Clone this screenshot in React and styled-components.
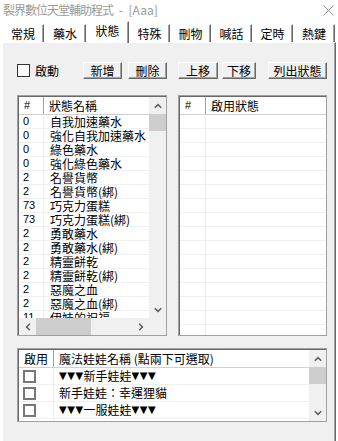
import React from 'react';
import styled, { createGlobalStyle } from 'styled-components';

const CJK = `"Noto Sans CJK TC", "Noto Sans CJK SC", "Liberation Sans", sans-serif`;
const NUM = `"Liberation Sans", Arial, sans-serif`;

const GlobalStyle = createGlobalStyle`
    html, body {
        margin: 0;
        padding: 0;
        background: #fff;
    }
    body {
        font-family: ${CJK};
        font-size: 12px;
        color: #000;
    }
`;

const Window = styled.div`
    width: 338px;
    height: 441px;
    overflow: hidden;
    background: #fff;
    display: flex;
    flex-direction: column;
    font-family: ${CJK};
    font-size: 12px;
`;

const TitleBar = styled.div`
    height: 20px;
    flex-shrink: 0;
    display: flex;
    align-items: center;
    justify-content: space-between;
    padding: 0 4px 0 3px;
    color: #999;
`;

const TitleText = styled.span`
    font-size: 12px;
    letter-spacing: -1px;
    line-height: 1;
    white-space: nowrap;

    span {
        letter-spacing: 0;
        word-spacing: 3px;
    }
`;

const TabStrip = styled.div`
    height: 22px;
    flex-shrink: 0;
    display: flex;
    align-items: flex-end;
    padding-left: 2px;
`;

const Tab = styled.div`
    box-sizing: border-box;
    width: ${props => props.$w}px;
    height: ${props => (props.$active ? 22 : 18)}px;
    margin-bottom: ${props => (props.$active ? -1 : 0)}px;
    position: relative;
    z-index: ${props => (props.$active ? 1 : 0)};
    background: #fff;
    border-top: 1px solid #fff;
    border-left: 1px solid #fff;
    border-right: 1px solid #696969;
    box-shadow: inset -1px 0 0 #a0a0a0;
    display: flex;
    align-items: center;
    justify-content: center;
    padding-bottom: ${props => (props.$active ? 3 : 0)}px;
    line-height: 1;
    white-space: nowrap;
`;

const Panel = styled.div`
    flex: 1;
    margin: 0 2px;
    background: #f0f0f0;
    border-top: 1px solid #fff;
    border-left: 1px solid #fff;
    border-right: 1px solid #696969;
    box-shadow: inset -1px 0 0 #a0a0a0;
    padding: 19px 8px 0 14px;
    display: flex;
    flex-direction: column;
`;

const Toolbar = styled.div`
    height: 17px;
    display: flex;
    align-items: center;
`;

const CheckBox = styled.span`
    box-sizing: border-box;
    flex: none;
    width: 13px;
    height: 13px;
    background: #fff;
    border: ${props => (props.$thick ? '2px solid #777' : '1px solid #333')};
`;

const Label = styled.span`
    margin-left: 5px;
    line-height: 1;
    white-space: nowrap;
`;

const Button = styled.div`
    box-sizing: border-box;
    width: ${props => props.$w}px;
    height: 17px;
    margin-left: ${props => props.$gap}px;
    background: #f0f0f0;
    border: 1px solid;
    border-color: #fff #696969 #696969 #fff;
    box-shadow: inset -1px -1px 0 #a0a0a0;
    display: flex;
    align-items: center;
    justify-content: center;
    line-height: 1;
    white-space: nowrap;
`;

const ListsRow = styled.div`
    margin-top: 16px;
    display: flex;
    gap: 11px;
`;

const ListBox = styled.div`
    box-sizing: border-box;
    width: ${props => props.$w}px;
    height: ${props => props.$h}px;
    margin-top: ${props => props.$top || 0}px;
    border: 1px solid #a0a0a0;
    padding: 1px 0 0 1px;
    box-shadow: inset 1px 1px 0 #696969;
    background: #fff;
    display: grid;
    grid-template-columns: ${props => (props.$vscroll ? '1fr 17px' : '1fr')};
    grid-template-rows: ${props => (props.$hscroll ? '1fr 17px' : '1fr')};
    overflow: hidden;
`;

const ListBody = styled.div`
    min-width: 0;
    min-height: 0;
    overflow: hidden;
    background: #fff;
`;

const HeaderRow = styled.div`
    box-sizing: border-box;
    height: 18px;
    display: flex;
    border-bottom: 1px solid #d0d0d0;
    background: #fff;
`;

const HeadCell = styled.div`
    box-sizing: border-box;
    width: ${props => (props.$w ? `${props.$w}px` : 'auto')};
    flex: ${props => (props.$w ? 'none' : '1')};
    border-right: ${props => (props.$w ? '1px solid #a0a0a0' : 'none')};
    padding-left: 5px;
    display: flex;
    align-items: center;
    font-family: ${props => (props.$num ? NUM : CJK)};
    font-size: ${props => (props.$num ? 11 : 12)}px;
    line-height: 1;
    white-space: nowrap;
`;

const Row = styled.div`
    box-sizing: border-box;
    height: ${props => props.$h}px;
    display: flex;
    border-bottom: 1px solid #f0f0f0;
    white-space: nowrap;
`;

const Cell = styled.div`
    box-sizing: border-box;
    width: ${props => (props.$w ? `${props.$w}px` : 'auto')};
    flex: ${props => (props.$w ? 'none' : '1')};
    border-right: ${props => (props.$w ? '1px solid #f0f0f0' : 'none')};
    padding-left: ${props => props.$pad}px;
    display: flex;
    align-items: center;
    font-family: ${props => (props.$num ? NUM : CJK)};
    font-size: ${props => (props.$num ? 11 : 12)}px;
    line-height: 1;
`;

const Tri = styled.span`
    font-family: "DejaVu Sans", sans-serif;
    font-size: 10px;
    letter-spacing: 0.5px;
`;

const VScroll = styled.div`
    background: #f0f0f0;
    display: flex;
    flex-direction: column;
    min-height: 0;
`;

const HScroll = styled.div`
    background: #f0f0f0;
    display: flex;
    min-width: 0;
`;

const ArrowBox = styled.div`
    flex: none;
    width: 17px;
    height: 17px;
    display: flex;
    align-items: center;
    justify-content: center;
`;

const Thumb = styled.div`
    flex: none;
    background: #cdcdcd;
    width: ${props => (props.$horizontal ? `${props.$size}px` : '17px')};
    height: ${props => (props.$horizontal ? '17px' : `${props.$size}px`)};
`;

const Spacer = styled.div`
    flex: 1;
`;

const Corner = styled.div`
    background: #f0f0f0;
`;

const Chevron = ({ dir }) => {
    const pts = {
        up: '0.8,4.8 4,1.6 7.2,4.8',
        down: '0.8,1.2 4,4.4 7.2,1.2',
        left: '4.8,0.8 1.6,4 4.8,7.2',
        right: '1.2,0.8 4.4,4 1.2,7.2',
    }[dir];
    const vertical = dir === 'up' || dir === 'down';
    return (
        <svg width={vertical ? 8 : 6} height={vertical ? 6 : 8} viewBox={vertical ? '0 0 8 6' : '0 0 6 8'}>
            <polyline points={pts} fill="none" stroke="#606060" strokeWidth="1.6" />
        </svg>
    );
};

const CloseIcon = () => (
    <svg width="11" height="11" viewBox="0 0 11 11">
        <path d="M0.5 0.5 L10.5 10.5 M10.5 0.5 L0.5 10.5" stroke="#999" strokeWidth="1" fill="none" />
    </svg>
);

const tabs = [
    ['常規', 42], ['藥水', 42], ['狀態', 43], ['特殊', 41],
    ['刪物', 41], ['喊話', 41], ['定時', 41], ['熱鍵', 42],
];

const statuses = [
    ['0', '自我加速藥水'],
    ['0', '強化自我加速藥水'],
    ['0', '綠色藥水'],
    ['0', '強化綠色藥水'],
    ['2', '名譽貨幣'],
    ['2', '名譽貨幣(綁)'],
    ['73', '巧克力蛋糕'],
    ['73', '巧克力蛋糕(綁)'],
    ['2', '勇敢藥水'],
    ['2', '勇敢藥水(綁)'],
    ['2', '精靈餅乾'],
    ['2', '精靈餅乾(綁)'],
    ['2', '惡魔之血'],
    ['2', '惡魔之血(綁)'],
    ['11', '伊娃的祝福'],
];

const dolls = [
    <><Tri>▼▼▼</Tri>新手娃娃<Tri>▼▼▼</Tri></>,
    <>新手娃娃：幸運狸貓</>,
    <><Tri>▼▼▼</Tri>一服娃娃<Tri>▼▼▼</Tri></>,
];

const App = () => {
    return (
        <Window>
            <GlobalStyle />
            <TitleBar>
                <TitleText>裂界數位天堂輔助程式<span> - [Aaa]</span></TitleText>
                <CloseIcon />
            </TitleBar>
            <TabStrip>
                {tabs.map(([name, w]) => (
                    <Tab key={name} $w={w} $active={name === '狀態'}>{name}</Tab>
                ))}
            </TabStrip>
            <Panel>
                <Toolbar>
                    <CheckBox />
                    <Label>啟動</Label>
                    <Button $w={39} $gap={24}>新增</Button>
                    <Button $w={39} $gap={6}>刪除</Button>
                    <Button $w={40} $gap={11}>上移</Button>
                    <Button $w={34} $gap={4}>下移</Button>
                    <Button $w={59} $gap={12}>列出狀態</Button>
                </Toolbar>
                <ListsRow>
                    <ListBox $w={150} $h={241} $vscroll $hscroll>
                        <ListBody>
                            <HeaderRow>
                                <HeadCell $w={25} $num>#</HeadCell>
                                <HeadCell>狀態名稱</HeadCell>
                            </HeaderRow>
                            {statuses.map(([n, name], i) => (
                                <Row key={i} $h={14}>
                                    <Cell $w={25} $pad={4} $num>{n}</Cell>
                                    <Cell $pad={6}>{name}</Cell>
                                </Row>
                            ))}
                        </ListBody>
                        <VScroll>
                            <ArrowBox><Chevron dir="up" /></ArrowBox>
                            <Thumb $size={17} />
                            <Spacer />
                            <ArrowBox><Chevron dir="down" /></ArrowBox>
                        </VScroll>
                        <HScroll>
                            <ArrowBox><Chevron dir="left" /></ArrowBox>
                            <Thumb $horizontal $size={55} />
                            <Spacer />
                            <ArrowBox><Chevron dir="right" /></ArrowBox>
                        </HScroll>
                        <Corner />
                    </ListBox>
                    <ListBox $w={149} $h={241}>
                        <ListBody>
                            <HeaderRow>
                                <HeadCell $w={26} $num>#</HeadCell>
                                <HeadCell>啟用狀態</HeadCell>
                            </HeaderRow>
                            {Array.from({ length: 16 }).map((_, i) => (
                                <Row key={i} $h={14}>
                                    <Cell $w={26} $pad={4} />
                                    <Cell $pad={6} />
                                </Row>
                            ))}
                        </ListBody>
                    </ListBox>
                </ListsRow>
                <ListBox $w={310} $h={74} $top={12} $vscroll>
                    <ListBody>
                        <HeaderRow>
                            <HeadCell $w={35}>啟用</HeadCell>
                            <HeadCell>魔法娃娃名稱 (點兩下可選取)</HeadCell>
                        </HeaderRow>
                        {dolls.map((d, i) => (
                            <Row key={i} $h={17}>
                                <Cell $w={35} $pad={4}><CheckBox $thick /></Cell>
                                <Cell $pad={5}>{d}</Cell>
                            </Row>
                        ))}
                        <Row $h={17}>
                            <Cell $w={35} $pad={4} />
                            <Cell $pad={5} />
                        </Row>
                    </ListBody>
                    <VScroll>
                        <ArrowBox><Chevron dir="up" /></ArrowBox>
                        <Thumb $size={17} />
                        <Spacer />
                        <ArrowBox><Chevron dir="down" /></ArrowBox>
                    </VScroll>
                </ListBox>
            </Panel>
        </Window>
    );
};

export default App;
